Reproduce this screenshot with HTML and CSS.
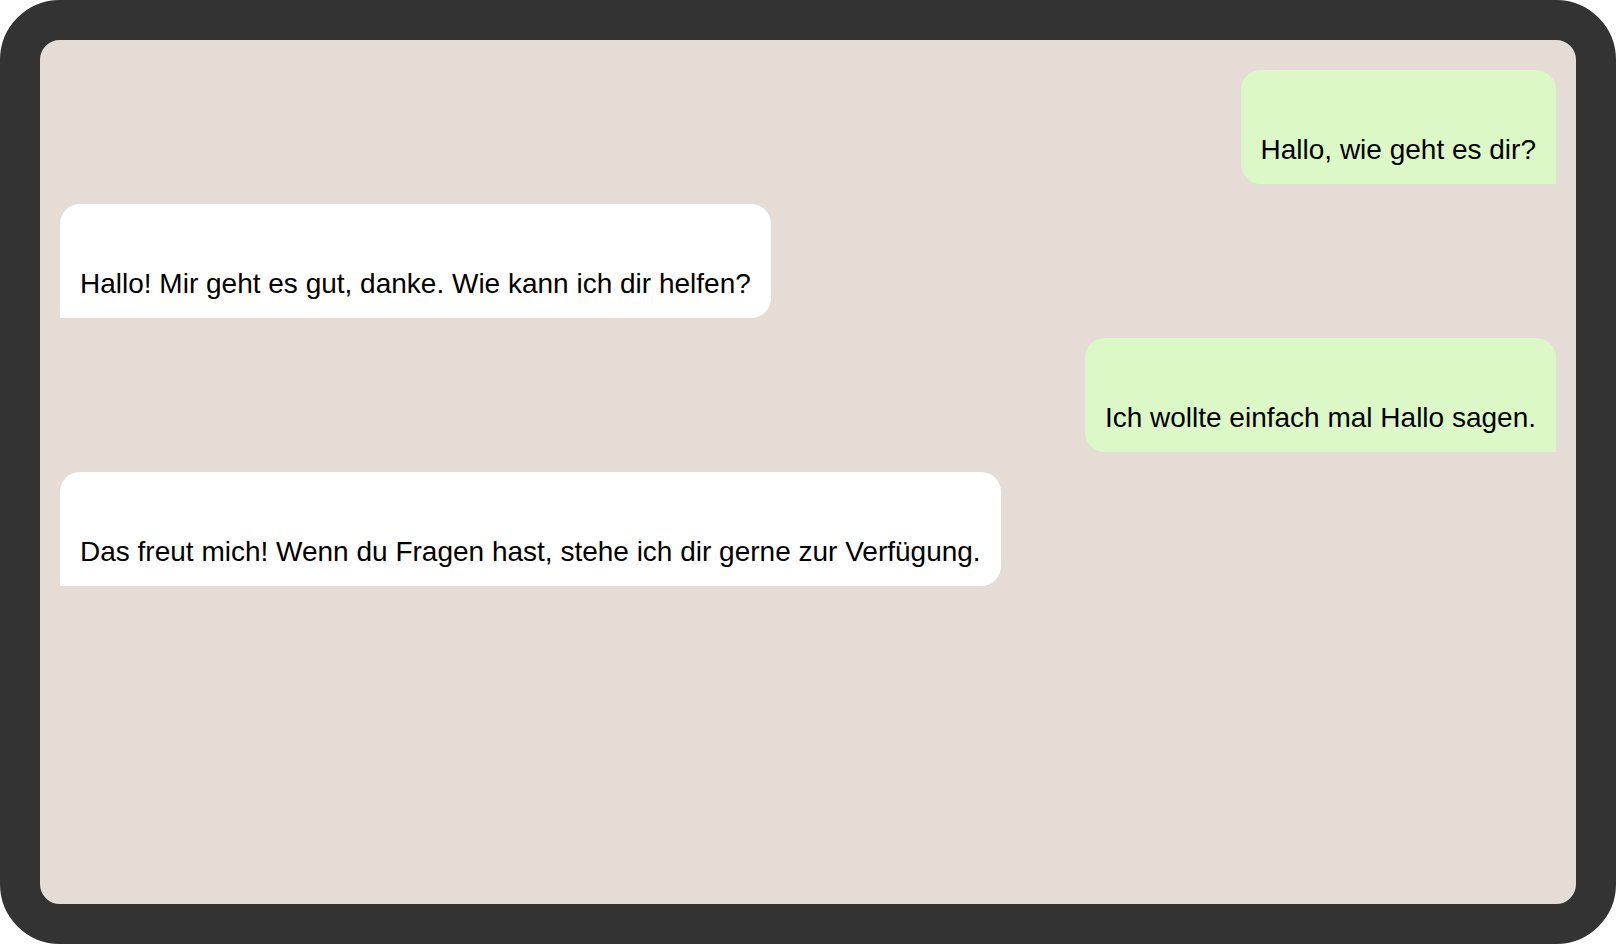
FILE: index.html
```html
<!DOCTYPE html>
<html lang="de">

<head>
  <meta charset="UTF-8">
  <meta name="viewport" content="width=device-width, initial-scale=1.0">
  <link rel="stylesheet" href="styles.css">
  <title>Chat</title>
</head>

<body>
  <div class="phone">
    <main class="chat">
      <div class="message sent">Hallo, wie geht es dir?</div>
      <div class="message received">Hallo! Mir geht es gut, danke. Wie kann ich dir helfen?</div>
      <div class="message sent">Ich wollte einfach mal Hallo sagen.</div>
      <div class="message received">Das freut mich! Wenn du Fragen hast, stehe ich dir gerne zur Verfügung.</div>
    </main>
  </div>
</body>

</html>
```

FILE: styles.css
```css
body {
  margin: 0;
  font-family: "Liberation Sans", Arial, sans-serif;
  color: #000;
  background: #fff;
}

.phone {
  box-sizing: border-box;
  width: 1616px;
  height: 944px;
  border: 40px solid #333;
  border-radius: 60px;
  background: #e5ddd5;
  overflow: hidden;
}

.chat {
  display: flex;
  flex-direction: column;
  gap: 20px;
  padding: 30px 20px;
}

.message {
  max-width: 70%;
  padding: 64px 20px 18px;
  font-size: 28px;
  line-height: 32px;
  border-radius: 20px;
}

.sent {
  align-self: flex-end;
  background: #dcf8c6;
  border-bottom-right-radius: 0;
}

.received {
  align-self: flex-start;
  background: #fff;
  border-bottom-left-radius: 0;
}
```
